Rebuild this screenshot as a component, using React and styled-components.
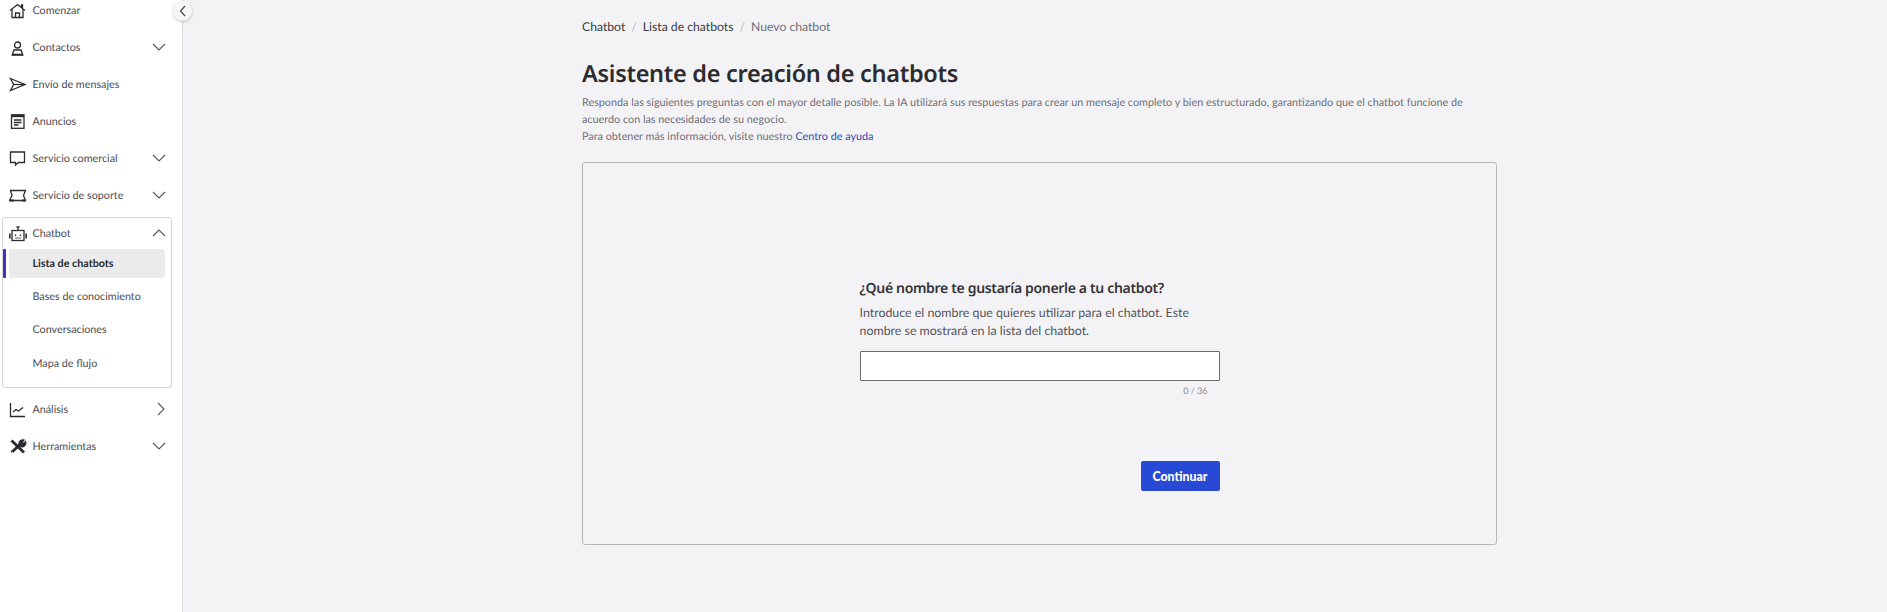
import React from 'react';
import styled, { createGlobalStyle } from 'styled-components';

const GlobalStyle = createGlobalStyle`
  html, body { margin: 0; padding: 0; height: 100%; background: #f3f3f6; overflow: hidden; }
  #root { height: 100%; }
  * { box-sizing: border-box; }
  body { text-rendering: geometricPrecision; }
`;

const Page = styled.div`
  display: flex;
  height: 612px;
  font-family: "Lato", "Liberation Sans", sans-serif;
`;

const Sidebar = styled.aside`
  position: relative;
  flex: 0 0 183px;
  background: #fff;
  border-right: 1px solid #dcdce0;
`;

const NavList = styled.nav`
  margin-top: -8.5px;
  padding-left: 2px;
  width: 172px;
`;

const NavRow = styled.div`
  display: flex;
  align-items: center;
  height: 37px;
  padding-left: 7px;
  font-size: 10.75px;
  color: #4a4a52;
`;

const NavIcon = styled.svg`
  flex: 0 0 18px;
  width: 18px;
  height: 18px;
  margin-right: 5.5px;
  fill: none;
  stroke: #2b2b30;
  stroke-width: 1.3;
`;

const NavLabel = styled.span`
  flex: 1;
`;

const Chevron = styled.svg`
  width: 14px;
  height: 14px;
  margin-right: ${p => (p.$inGroup ? '5px' : '6px')};
  fill: none;
  stroke: #55555c;
  stroke-width: 1.1;
`;

const Group = styled.div`
  border: 1px solid #d4d4d8;
  border-radius: 3px;
  height: 171px;
  margin: 3px 0;
`;

const GroupHead = styled(NavRow)`
  height: 31px;
  padding-left: 6px;
`;

const SubItem = styled.div`
  position: relative;
  display: flex;
  align-items: center;
  height: ${p => (p.$active ? '29px' : '33.6px')};
  margin: 0 6px ${p => (p.$active ? '2px' : '0')};
  padding-left: 23.5px;
  border-radius: 3px;
  font-size: 10.75px;
  font-weight: ${p => (p.$active ? 700 : 400)};
  color: ${p => (p.$active ? '#2b2b30' : '#4a4a52')};
  background: ${p => (p.$active ? '#ebebeb' : 'transparent')};
`;

const ActiveMark = styled.span`
  position: absolute;
  left: -6px;
  top: 0;
  width: 3px;
  height: 29px;
  background: #4a2bc9;
  border-radius: 1px;
`;

const CollapseButton = styled.button`
  position: absolute;
  top: 1px;
  right: -10px;
  width: 19px;
  height: 20px;
  padding: 0;
  border: 0;
  border-radius: 50%;
  background: #f6f6f8;
  box-shadow: 0 1px 3px rgba(0, 0, 0, 0.22);
  display: flex;
  align-items: center;
  justify-content: center;
`;

const Main = styled.main`
  flex: 1;
  padding: 18px 0 0 399px;
`;

const Content = styled.div`
  width: 915px;
`;

const Breadcrumb = styled.div`
  display: flex;
  align-items: center;
  gap: 6px;
  height: 17px;
  font-size: 12.2px;
`;

const Crumb = styled.span`
  color: ${p => (p.$current ? '#6e6e78' : '#3a3a40')};
`;

const Slash = styled.span`
  color: #b5b5bb;
`;

const Title = styled.h1`
  margin: 21px 0 0;
  height: 34px;
  font-family: "Noto Sans", "Liberation Sans", sans-serif;
  font-size: 23.5px;
  letter-spacing: -0.3px;
  line-height: 34px;
  font-weight: 600;
  color: #2c2c30;
`;

const Intro = styled.p`
  margin: 4px 0 0;
  width: 890px;
  font-size: 10.82px;
  line-height: 17px;
  color: #6f6f78;
`;

const HelpLink = styled.a`
  color: #2f49b8;
`;

const WizardCard = styled.section`
  display: flex;
  justify-content: center;
  height: 383px;
  margin-top: 17px;
  border: 1px solid #b6b6bc;
  border-radius: 3px;
`;

const Question = styled.div`
  width: 360px;
  padding-top: 116px;
`;

const QuestionTitle = styled.h2`
  margin: 0;
  font-family: "Noto Sans", "Liberation Sans", sans-serif;
  font-size: 14px;
  letter-spacing: -0.33px;
  line-height: 20px;
  font-weight: 600;
  color: #333338;
`;

const QuestionText = styled.p`
  margin: 5px 0 0;
  font-size: 12.4px;
  line-height: 17.5px;
  color: #55555c;
`;

const NameInput = styled.input`
  display: block;
  width: 360px;
  height: 30px;
  margin-top: 12px;
  background: #fff;
  border: 1px solid #6a6a70;
  border-radius: 1px;
`;

const Counter = styled.div`
  margin-top: 3px;
  padding-right: 12px;
  text-align: right;
  font-size: 9px;
  line-height: 13px;
  color: #8a8a90;
`;

const Actions = styled.div`
  display: flex;
  justify-content: flex-end;
  margin-top: 64px;
`;

const ContinueButton = styled.button`
  width: 79px;
  height: 30px;
  border: 0;
  border-radius: 2px;
  background: #2749d6;
  color: #fff;
  font-family: inherit;
  font-size: 12.3px;
  font-weight: 900;
`;

const Down = () => <Chevron viewBox="0 0 14 14"><path d="M1 4l6 6 6-6" /></Chevron>;
const Up = () => <Chevron $inGroup viewBox="0 0 14 14"><path d="M1 10l6-6 6 6" /></Chevron>;
const Right = () => <Chevron viewBox="0 0 14 14"><path d="M6 1l6 6-6 6" /></Chevron>;

const icons = {
  home: <><path d="M1 9.500L8.500 3.500l7.500 6" /><path d="M3 8v8.500h11V8" /><path d="M6.500 16.500v-4.500h4v4.500" /><path d="M12.500 6V4h1v3" /></>,
  user: <><circle cx="8.500" cy="7" r="3" /><path d="M5 12h7l1.800 5H3.200z" /><path d="M3 16.500h11" strokeWidth="1.600" /></>,
  send: <><path d="M1.500 3.500L16 9.500 1.500 15.500l3.200-6z" /><path d="M4.700 9.500H16" /></>,
  news: <><rect x="2.500" y="2.800" width="12.500" height="13.500" /><path d="M2.500 4h12.500" strokeWidth="2.400" /><path d="M5 8h7.500M5 10.500h7.500M5 13h4.500" /></>,
  chat: <path d="M1.500 3h14v10.500H9.500l-3 2.500v-2.500h-5z" />,
  ticket: <><path d="M1.500 4.500H16.500L14.500 9.500l2 5H0.500L3 9.500z" /><path d="M1 14.500h4M13 14.500h3.500" strokeWidth="2" /></>,
  bot: <><rect x="3" y="6.500" width="12" height="10" /><path d="M9 6.500V3.500M7.500 3h3" /><path d="M0.700 9.500v5M17.300 9.500v5" strokeWidth="1.800" /><path d="M6.500 10.500v1.500M11.500 10.500v1.500M6.500 14h1M8.500 14h1M10.500 14h1" /></>,
  chart: <><path d="M1.500 3v13.500H16" /><path d="M4 12l3-2.500 2.500 1.500L14 7.500" /></>,
  tools: (
    <>
      <path d="M2.500 3.500L15 15.500" strokeWidth="2.800" />
      <path d="M2.500 15.500l8.500-8" strokeWidth="3" />
      <path d="M10 6.500a3.800 3.800 0 0 1 5-3.500l-2 2.200 1.500 1.500 2-2a3.800 3.800 0 0 1-4.500 5z" fill="#2b2b30" />
      <path d="M3 15l1 .9" stroke="#fff" strokeWidth="1" />
    </>
  ),
};

const Icon = ({ name }) => <NavIcon viewBox="0 0 18 18">{icons[name]}</NavIcon>;

const Item = ({ icon, label, arrow }) => (
  <NavRow>
    <Icon name={icon} />
    <NavLabel>{label}</NavLabel>
    {arrow}
  </NavRow>
);

export default function App() {
  return (
    <Page>
      <GlobalStyle />
      <Sidebar>
        <CollapseButton aria-label="Contraer">
          <svg width="10" height="12" viewBox="0 0 10 12" fill="none" stroke="#44444a" strokeWidth="1.200"><path d="M7 1L2.500 6 7 11" /></svg>
        </CollapseButton>
        <NavList>
          <Item icon="home" label="Comenzar" />
          <Item icon="user" label="Contactos" arrow={<Down />} />
          <Item icon="send" label="Envío de mensajes" />
          <Item icon="news" label="Anuncios" />
          <Item icon="chat" label="Servicio comercial" arrow={<Down />} />
          <Item icon="ticket" label="Servicio de soporte" arrow={<Down />} />
          <Group>
            <GroupHead>
              <Icon name="bot" />
              <NavLabel>Chatbot</NavLabel>
              <Up />
            </GroupHead>
            <SubItem $active><ActiveMark />Lista de chatbots</SubItem>
            <SubItem>Bases de conocimiento</SubItem>
            <SubItem>Conversaciones</SubItem>
            <SubItem>Mapa de flujo</SubItem>
          </Group>
          <Item icon="chart" label="Análisis" arrow={<Right />} />
          <Item icon="tools" label="Herramientas" arrow={<Down />} />
        </NavList>
      </Sidebar>
      <Main>
        <Content>
          <Breadcrumb>
            <Crumb>Chatbot</Crumb>
            <Slash>/</Slash>
            <Crumb>Lista de chatbots</Crumb>
            <Slash>/</Slash>
            <Crumb $current>Nuevo chatbot</Crumb>
          </Breadcrumb>
          <Title>Asistente de creación de chatbots</Title>
          <Intro>
            Responda las siguientes preguntas con el mayor detalle posible. La IA utilizará sus respuestas para crear un mensaje completo y bien estructurado, garantizando que el chatbot funcione de acuerdo con las necesidades de su negocio.
            <br />
            Para obtener más información, visite nuestro <HelpLink>Centro de ayuda</HelpLink>
          </Intro>
          <WizardCard>
            <Question>
              <QuestionTitle>¿Qué nombre te gustaría ponerle a tu chatbot?</QuestionTitle>
              <QuestionText>Introduce el nombre que quieres utilizar para el chatbot. Este nombre se mostrará en la lista del chatbot.</QuestionText>
              <NameInput />
              <Counter>0 / 36</Counter>
              <Actions>
                <ContinueButton>Continuar</ContinueButton>
              </Actions>
            </Question>
          </WizardCard>
        </Content>
      </Main>
    </Page>
  );
}
